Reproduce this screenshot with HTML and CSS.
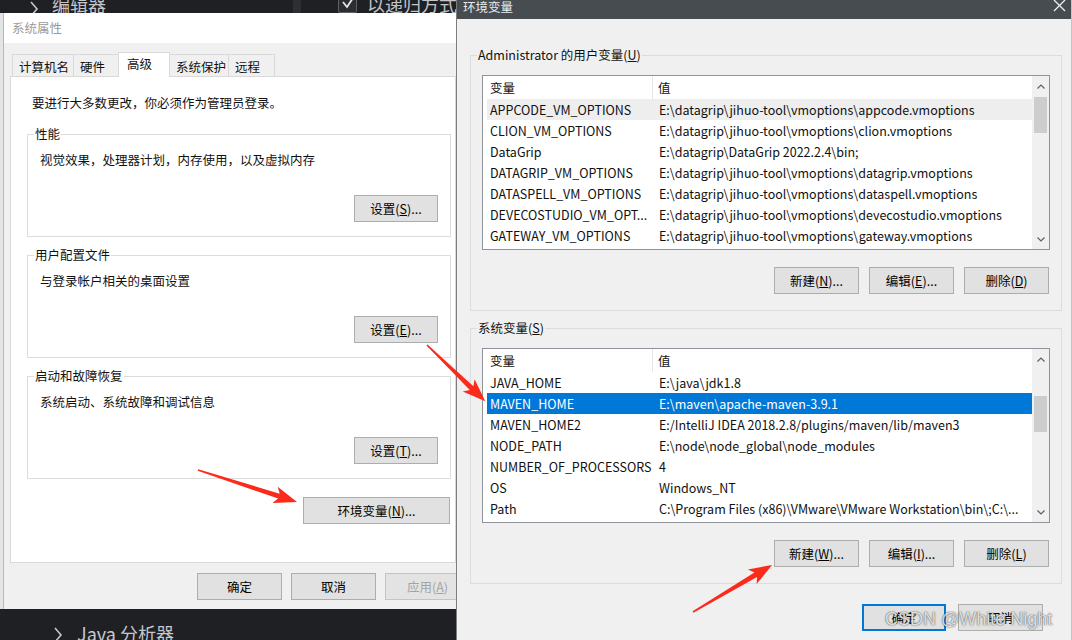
FILE: index.html
```html
<!DOCTYPE html>
<html lang="zh-CN">
<head>
<meta charset="utf-8">
<title>环境变量</title>
<link rel="stylesheet" href="styles.css">
</head>
<body>
<div class="screen">
  <div class="left">
    <div class="ide-top">
      <svg class="ide-chev" width="10" height="13" viewBox="0 0 10 13"><polyline points="2,2 8,9 2,16" fill="none" stroke="#c4c6c9" stroke-width="1.6"/></svg>
      <span class="ide-label">编辑器</span>
      <span class="ide-sep"></span>
      <span class="ide-check"><svg width="14" height="12" viewBox="0 0 14 12"><polyline points="2,4 6,9 12,0" fill="none" stroke="#e6e6e6" stroke-width="1.8"/></svg></span>
      <span class="ide-label2">以递归方式</span>
    </div>
    <div class="sysprops">
      <div class="sp-title">系统属性</div>
      <div class="sp-body">
        <div class="tabs">
          <div class="tab">计算机名</div>
          <div class="tab">硬件</div>
          <div class="tab active">高级</div>
          <div class="tab">系统保护</div>
          <div class="tab">远程</div>
        </div>
        <div class="tabpanel">
          <p class="intro">要进行大多数更改，你必须作为管理员登录。</p>
          <fieldset class="group">
            <legend>性能</legend>
            <p class="desc">视觉效果，处理器计划，内存使用，以及虚拟内存</p>
            <div class="group-actions"><button class="btn">设置(<u>S</u>)...</button></div>
          </fieldset>
          <fieldset class="group">
            <legend>用户配置文件</legend>
            <p class="desc">与登录帐户相关的桌面设置</p>
            <div class="group-actions"><button class="btn">设置(<u>E</u>)...</button></div>
          </fieldset>
          <fieldset class="group">
            <legend>启动和故障恢复</legend>
            <p class="desc">系统启动、系统故障和调试信息</p>
            <div class="group-actions"><button class="btn">设置(<u>T</u>)...</button></div>
          </fieldset>
          <div class="env-row"><button class="btn btn-wide">环境变量(<u>N</u>)...</button></div>
        </div>
        <div class="dlg-buttons">
          <button class="btn btn-dlg">确定</button>
          <button class="btn btn-dlg">取消</button>
          <button class="btn btn-dlg disabled">应用(<u>A</u>)</button>
        </div>
      </div>
    </div>
    <div class="ide-bottom">
      <svg class="ide-chev2" width="10" height="20" viewBox="0 0 10 20"><polyline points="2,4 8,11 2,18" fill="none" stroke="#c4c6c9" stroke-width="1.6"/></svg>
      <span class="ide-label3">Java 分析器</span>
    </div>
  </div>

  <div class="envwin">
    <div class="ew-title">
      <span class="ew-title-text">环境变量</span>
      <svg class="ew-close" width="13" height="13" viewBox="0 0 13 13"><path d="M1 1 L12 12 M12 1 L1 12" stroke="#f0f0f0" stroke-width="1.3" fill="none"/></svg>
    </div>
    <div class="ew-body">
      <fieldset class="vgroup">
        <legend>Administrator 的用户变量(<u>U</u>)</legend>
        <div class="listbox">
          <div class="lb-main">
            <div class="lb-head"><span class="h1">变量</span><span class="h2">值</span></div>
            <div class="lb-row hover"><span class="c1">APPCODE_VM_OPTIONS</span><span class="c2">E:\datagrip\jihuo-tool\vmoptions\appcode.vmoptions</span></div>
            <div class="lb-row"><span class="c1">CLION_VM_OPTIONS</span><span class="c2">E:\datagrip\jihuo-tool\vmoptions\clion.vmoptions</span></div>
            <div class="lb-row"><span class="c1">DataGrip</span><span class="c2">E:\datagrip\DataGrip 2022.2.4\bin;</span></div>
            <div class="lb-row"><span class="c1">DATAGRIP_VM_OPTIONS</span><span class="c2">E:\datagrip\jihuo-tool\vmoptions\datagrip.vmoptions</span></div>
            <div class="lb-row"><span class="c1">DATASPELL_VM_OPTIONS</span><span class="c2">E:\datagrip\jihuo-tool\vmoptions\dataspell.vmoptions</span></div>
            <div class="lb-row"><span class="c1">DEVECOSTUDIO_VM_OPT...</span><span class="c2">E:\datagrip\jihuo-tool\vmoptions\devecostudio.vmoptions</span></div>
            <div class="lb-row"><span class="c1">GATEWAY_VM_OPTIONS</span><span class="c2">E:\datagrip\jihuo-tool\vmoptions\gateway.vmoptions</span></div>
            <div class="lb-row"><span class="c1">GOLAND_VM_OPTIONS</span><span class="c2">E:\datagrip\jihuo-tool\vmoptions\goland.vmoptions</span></div>
          </div>
          <div class="vscroll">
            <div class="sb-btn"><svg width="8" height="5" viewBox="0 0 8 5"><polyline points="0.5,4.5 4,1 7.5,4.5" fill="none" stroke="#606060" stroke-width="1.2"/></svg></div>
            <div class="sb-track"><div class="sb-thumb thumb-top"></div></div>
            <div class="sb-btn"><svg width="8" height="5" viewBox="0 0 8 5"><polyline points="0.5,0.5 4,4 7.5,0.5" fill="none" stroke="#606060" stroke-width="1.2"/></svg></div>
          </div>
        </div>
        <div class="vg-actions">
          <button class="btn btn-var">新建(<u>N</u>)...</button>
          <button class="btn btn-var">编辑(<u>E</u>)...</button>
          <button class="btn btn-var">删除(<u>D</u>)</button>
        </div>
      </fieldset>

      <fieldset class="vgroup vgroup-sys">
        <legend>系统变量(<u>S</u>)</legend>
        <div class="listbox">
          <div class="lb-main">
            <div class="lb-head"><span class="h1">变量</span><span class="h2">值</span></div>
            <div class="lb-row"><span class="c1">JAVA_HOME</span><span class="c2">E:\java\jdk1.8</span></div>
            <div class="lb-row selected"><span class="c1">MAVEN_HOME</span><span class="c2">E:\maven\apache-maven-3.9.1</span></div>
            <div class="lb-row"><span class="c1">MAVEN_HOME2</span><span class="c2">E:/IntelliJ IDEA 2018.2.8/plugins/maven/lib/maven3</span></div>
            <div class="lb-row"><span class="c1">NODE_PATH</span><span class="c2">E:\node\node_global\node_modules</span></div>
            <div class="lb-row"><span class="c1">NUMBER_OF_PROCESSORS</span><span class="c2">4</span></div>
            <div class="lb-row"><span class="c1">OS</span><span class="c2">Windows_NT</span></div>
            <div class="lb-row"><span class="c1">Path</span><span class="c2">C:\Program Files (x86)\VMware\VMware Workstation\bin\;C:\...</span></div>
            <div class="lb-row"><span class="c1">PATHEXT</span><span class="c2">.COM;.EXE;.BAT;.CMD;.VBS;.VBE;.JS;.JSE;.WSF;.WSH;.MSC</span></div>
          </div>
          <div class="vscroll">
            <div class="sb-btn"><svg width="8" height="5" viewBox="0 0 8 5"><polyline points="0.5,4.5 4,1 7.5,4.5" fill="none" stroke="#606060" stroke-width="1.2"/></svg></div>
            <div class="sb-track"><div class="sb-thumb thumb-mid"></div></div>
            <div class="sb-btn"><svg width="8" height="5" viewBox="0 0 8 5"><polyline points="0.5,0.5 4,4 7.5,0.5" fill="none" stroke="#606060" stroke-width="1.2"/></svg></div>
          </div>
        </div>
        <div class="vg-actions">
          <button class="btn btn-var">新建(<u>W</u>)...</button>
          <button class="btn btn-var">编辑(<u>I</u>)...</button>
          <button class="btn btn-var">删除(<u>L</u>)</button>
        </div>
      </fieldset>

      <div class="ew-buttons">
        <button class="btn btn-ok default">确定</button>
        <button class="btn btn-cancel">取消</button>
      </div>
    </div>
  </div>

  <svg class="annot" width="1072" height="640" viewBox="0 0 1072 640">
    <g fill="#fb2b1c">
      <polygon transform="translate(427,345) rotate(44)" points="0,-0.8 62,-2.6 58,-8.5 81,0 58,8.5 62,2.6 0,0.8"/>
      <polygon transform="translate(198,470) rotate(17.9)" points="0,-0.8 85,-2.6 81,-8.5 104,0 81,8.5 85,2.6 0,0.8"/>
      <polygon transform="translate(693,612) rotate(-30.75)" points="0,-0.8 73,-2.6 69,-8.5 92,0 69,8.5 73,2.6 0,0.8"/>
    </g>
  </svg>
  <div class="watermark">CSDN @White Night</div>
</div>
</body>
</html>
```

FILE: styles.css
```css
* { box-sizing: border-box; }

html, body {
  margin: 0;
  padding: 0;
}

body {
  width: 1072px;
  height: 640px;
  overflow: hidden;
  background: #1f2023;
  font-family: "Noto Sans CJK SC", "Noto Sans", sans-serif;
  font-size: 12.5px;
  line-height: 16px;
  color: #111;
}

u {
  text-decoration: underline;
  text-underline-offset: 1px;
}

.screen {
  position: relative;
  display: flex;
  width: 1072px;
  height: 640px;
}

/* ---------- left: IDE background + 系统属性 ---------- */
.left {
  width: 456px;
  flex: none;
  display: flex;
  flex-direction: column;
  overflow: hidden;
  background: #1f2023;
}

.ide-top {
  height: 13px;
  flex: none;
  display: flex;
  align-items: flex-start;
  overflow: hidden;
  color: #c3c5c8;
  font-size: 18px;
  line-height: 18px;
}

.ide-chev {
  flex: none;
  margin-left: 29px;
}

.ide-label {
  margin-left: 13px;
  margin-top: -5px;
  white-space: nowrap;
}

.ide-sep {
  flex: none;
  width: 8px;
  height: 13px;
  margin-left: 187px;
  background: #2d2f33;
}

.ide-check {
  flex: none;
  width: 19px;
  height: 19px;
  margin-left: 37px;
  margin-top: -6px;
  border: 1px solid #5d6066;
  border-radius: 2px;
  background: #2b2d31;
  display: flex;
  align-items: center;
  justify-content: center;
}

.ide-label2 {
  margin-left: 10px;
  margin-top: -5px;
  white-space: nowrap;
}

.sysprops {
  width: 480px;
  height: 596px;
  flex: none;
  display: flex;
  flex-direction: column;
  border-left: 3px solid #e4e4e4;
}

.sp-title {
  height: 30px;
  flex: none;
  background: #ffffff;
  border-left: 1px solid #b8b8b8;
  padding-left: 8px;
  line-height: 30px;
  color: #9a9a9a;
}

.sp-body {
  flex: 1;
  background: #f0f0f0;
  border-left: 1px solid #b8b8b8;
  padding: 11px 0 0 6px;
}

.tabs {
  display: flex;
  align-items: flex-end;
  height: 22px;
  margin-left: 2px;
}

.tab {
  height: 22px;
  padding: 3px 0 0 6px;
  line-height: 18px;
  border: 1px solid #d9d9d9;
  border-bottom: none;
  border-right: none;
  background: #f0f0f0;
  white-space: nowrap;
}

.tab:nth-child(1) { width: 61px; }
.tab:nth-child(2) { width: 45px; }
.tab:nth-child(3) { width: 52px; }
.tab:nth-child(4) { width: 58px; }
.tab:nth-child(5) { width: 47px; border-right: 1px solid #d9d9d9; }

.tab.active {
  position: relative;
  z-index: 1;
  height: 25px;
  margin-bottom: -1px;
  padding: 2px 0 0 8px;
  background: #ffffff;
  border-right: 1px solid #d9d9d9;
}

.tab.active + .tab { border-left: none; }

.tabpanel {
  width: 446px;
  height: 487px;
  background: #ffffff;
  border: 1px solid #d9d9d9;
  padding: 18px 4px 0 16px;
  display: flex;
  flex-direction: column;
}

.intro {
  margin: 0;
  padding-left: 5px;
  height: 16px;
  white-space: nowrap;
}

.group {
  width: 424px;
  margin: 15px 0 0 0;
  padding: 0 12px 14px 6px;
  border: 1px solid #dcdcdc;
  min-inline-size: 0;
}

.group + .group { margin-top: 10px; }

.group legend {
  padding: 0 1px;
  height: 16px;
  line-height: 16px;
}

.desc {
  margin: 10px 0 0 0;
  padding-left: 6px;
  height: 16px;
  white-space: nowrap;
}

.group-actions {
  display: flex;
  justify-content: flex-end;
  margin-top: 27px;
}

.env-row {
  display: flex;
  justify-content: flex-end;
  margin-top: 18px;
  padding-right: 1px;
}

.dlg-buttons {
  display: flex;
  justify-content: flex-end;
  gap: 9px;
  margin-top: 10px;
  padding-right: 10px;
}

.ide-bottom {
  height: 31px;
  flex: none;
  display: flex;
  align-items: flex-start;
  padding-top: 14px;
  color: #c6c8cb;
  font-size: 18px;
  line-height: 20px;
  overflow: hidden;
}

.ide-chev2 {
  flex: none;
  margin-left: 53px;
  margin-top: 1px;
}

.ide-label3 {
  margin-left: 14px;
  white-space: nowrap;
}

/* ---------- buttons ---------- */
.btn {
  font: inherit;
  font-size: 12.5px;
  height: 27px;
  width: 84px;
  padding: 0;
  line-height: 25px;
  text-align: center;
  color: #000;
  background: #e1e1e1;
  border: 1px solid #adadad;
  border-radius: 0;
  white-space: nowrap;
}

.btn-wide { width: 147px; }
.btn-dlg { width: 85px; }
.btn-var { width: 85px; }
.btn-ok { width: 84px; }
.btn-cancel { width: 85px; }

.btn.disabled {
  color: #a3a3a3;
  border-color: #c4c4c4;
  background: #e3e3e3;
}

.btn.default {
  border-color: #0078d7;
  box-shadow: inset 0 0 0 1px #0078d7;
}

/* ---------- right: 环境变量 ---------- */
.envwin {
  width: 616px;
  height: 640px;
  flex: none;
  display: flex;
  flex-direction: column;
  background: #f0f0f0;
  border-left: 1px solid #7c7c7c;
  border-right: 1px solid #c4c4c4;
}

.ew-title {
  height: 19px;
  flex: none;
  display: flex;
  justify-content: space-between;
  align-items: flex-start;
  background: #474c50;
  color: #eaeaea;
  padding: 0 5px 0 6px;
  line-height: 14px;
}

.ew-close { margin-top: -1px; }

.ew-body {
  flex: 1;
  padding: 28px 9px 0 13px;
}

.vgroup {
  width: 592px;
  margin: 0;
  padding: 0 11px 16px 6px;
  border: 1px solid #dcdcdc;
  min-inline-size: 0;
}

.vgroup legend {
  padding: 0 1px;
  height: 16px;
  line-height: 16px;
  white-space: nowrap;
}

.vgroup-sys { margin-top: 9px; }

.listbox {
  display: flex;
  width: 568px;
  height: 175px;
  margin: 12px 0 0 5px;
  background: #ffffff;
  border: 1px solid #8f949b;
}

.lb-main {
  flex: 1;
  min-width: 0;
  overflow: hidden;
}

.lb-head {
  display: flex;
  height: 23px;
  line-height: 23px;
}

.lb-head .h1 {
  width: 170px;
  flex: none;
  padding-left: 7px;
  border-right: 1px solid #e5e5e5;
}

.lb-head .h2 { padding-left: 5px; }

.lb-row {
  display: flex;
  height: 21px;
  margin-left: 4px;
  line-height: 21px;
  white-space: nowrap;
}

.lb-row .c1 {
  width: 166px;
  flex: none;
  padding-left: 3px;
  overflow: hidden;
}

.lb-row .c2 {
  flex: 1;
  min-width: 0;
  padding-left: 6px;
  overflow: hidden;
}

.lb-row.hover { background: #eeeeee; }

.lb-row.selected {
  background: #0078d7;
  color: #ffffff;
}

.vscroll {
  width: 17px;
  flex: none;
  display: flex;
  flex-direction: column;
  background: #f0f0f0;
}

.sb-btn {
  height: 20px;
  flex: none;
  display: flex;
  align-items: center;
  justify-content: center;
}

.sb-track { flex: 1; }

.sb-thumb {
  width: 13px;
  height: 36px;
  margin-left: 2px;
  background: #cdcdcd;
}

.thumb-top { margin-top: 1px; }
.thumb-mid { margin-top: 27px; }

.vg-actions {
  display: flex;
  justify-content: flex-end;
  gap: 10px;
  margin-top: 17px;
  padding-right: 1px;
}

.ew-buttons {
  display: flex;
  justify-content: flex-end;
  gap: 12px;
  margin-top: 20px;
  padding-right: 19px;
}

/* ---------- overlays ---------- */
.annot {
  position: absolute;
  left: 0;
  top: 0;
  pointer-events: none;
}

.watermark {
  position: absolute;
  left: 885px;
  top: 608px;
  font-family: "Liberation Sans", Arial, sans-serif;
  font-size: 18px;
  line-height: 22px;
  color: rgba(255, 255, 255, 0.82);
  text-shadow: 0 0 1px rgba(60, 60, 60, 0.9), 0 0 2px rgba(60, 60, 60, 0.5);
  white-space: nowrap;
  pointer-events: none;
}
```
